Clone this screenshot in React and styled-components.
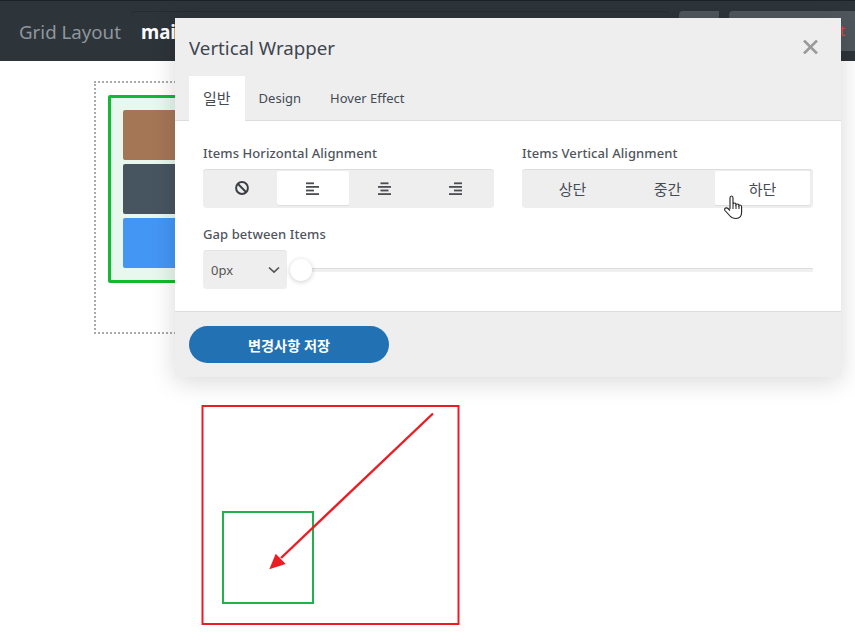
import React from 'react'
import styled, { createGlobalStyle } from 'styled-components';

const FONT = '"Noto Sans", "Noto Sans CJK KR", sans-serif';

export default function App() {
    return (
        <Page>
            <GlobalStyle />
            <Header>
                <PageTitle>Grid Layout</PageTitle>
                <NameField>main</NameField>
                <HeaderButton $width={40} />
                <HeaderButton $width={126}><ExitText>t</ExitText></HeaderButton>
            </Header>
            <Canvas>
                <Wrapper>
                    <Tile $color="#a57656" />
                    <Tile $color="#475561" />
                    <Tile $color="#4496f5" />
                </Wrapper>
            </Canvas>
            <Sketch width="262" height="224" viewBox="0 0 262 224">
                <rect x="2.5" y="2" width="256" height="218" fill="none" stroke="#ed1c24" strokeWidth="2" />
                <rect x="23" y="108" width="90" height="91" fill="none" stroke="#22b14c" strokeWidth="2" />
                <line x1="233" y1="9.5" x2="81" y2="154" stroke="#ed1c24" strokeWidth="2.4" />
                <polygon points="69.3,165.3 75.7,149.7 85.7,160" fill="#ed1c24" />
            </Sketch>

            <Modal>
                <ModalHead>
                    <ModalTitle>Vertical Wrapper</ModalTitle>
                    <CloseIcon width="15" height="14" viewBox="0 0 15 14">
                        <path d="M1 0.5 L14 13.5 M14 0.5 L1 13.5" stroke="#9a9a9a" strokeWidth="2.6" fill="none" />
                    </CloseIcon>
                </ModalHead>
                <Tabs>
                    <Tab $active $hangul>일반</Tab>
                    <Tab>Design</Tab>
                    <Tab>Hover Effect</Tab>
                </Tabs>
                <ModalBody>
                    <Columns>
                        <Field>
                            <Label>Items Horizontal Alignment</Label>
                            <Segments>
                                <Segment><BanIcon /></Segment>
                                <Segment $active><AlignIcon side="left" /></Segment>
                                <Segment><AlignIcon side="center" /></Segment>
                                <Segment><AlignIcon side="right" /></Segment>
                            </Segments>
                        </Field>
                        <Field>
                            <Label>Items Vertical Alignment</Label>
                            <Segments>
                                <Segment>상단</Segment>
                                <Segment>중간</Segment>
                                <Segment $active>하단</Segment>
                            </Segments>
                        </Field>
                    </Columns>
                    <GapField>
                        <Label>Gap between Items</Label>
                        <GapRow>
                            <GapSelect>
                                0px
                                <svg width="12" height="8" viewBox="0 0 12 8">
                                    <path d="M1 1.5 L6 6.2 L11 1.5" stroke="#555" strokeWidth="1.7" fill="none" />
                                </svg>
                            </GapSelect>
                            <Slider>
                                <Knob />
                            </Slider>
                        </GapRow>
                    </GapField>
                </ModalBody>
                <ModalFoot>
                    <SaveButton>변경사항 저장</SaveButton>
                </ModalFoot>
            </Modal>

            <HandCursor width="19" height="25" viewBox="0 0 19 25">
                <path
                    d="M6 14 V3 Q6 1 7.5 1 Q9 1 9 3 V9 Q9.3 8 10.5 8 Q12 8 12 9.5 Q12.3 9 13.5 9 Q15 9 15 10.5 Q15.3 10 16 10 Q17.6 10 17.6 12 V17 Q17.6 23.5 12 23.5 Q8 23.5 6 21 L1 15.5 Q0 14 1.5 13 Q3 12.5 4 13.5 L6 15.5"
                    fill="#fff"
                    stroke="#222"
                    strokeWidth="1.1"
                />
                <path d="M9 9 V14 M12 9.5 V14 M15 10.5 V14" stroke="#222" strokeWidth="1" fill="none" />
            </HandCursor>
        </Page>
    )
}

function BanIcon() {
    return (
        <svg width="14" height="14" viewBox="0 0 14 14">
            <circle cx="7" cy="7" r="5.9" fill="none" stroke="#3b3f45" strokeWidth="2" />
            <line x1="3" y1="3" x2="11" y2="11" stroke="#3b3f45" strokeWidth="2" />
        </svg>
    )
}

const ALIGN_X = {
    left: [0, 0, 0, 0],
    center: [2.5, 0, 2.5, 0],
    right: [5, 0, 5, 0],
};

function AlignIcon({ side }) {
    const widths = [8, 13, 8, 13];
    return (
        <svg width="13" height="13" viewBox="0 0 13 13">
            {widths.map((w, i) => (
                <rect key={i} x={ALIGN_X[side][i]} y={0.4 + i * 3.6} width={w} height="1.8" fill="#4a4d52" />
            ))}
        </svg>
    )
}

const GlobalStyle = createGlobalStyle`
body {
    margin: 0;
    background: #fff;
    font-family: ${FONT};
}
`;

const Page = styled.div`
position: relative;
width: 855px;
height: 644px;
overflow: hidden;
background: #fff;
`;

const Header = styled.div`
display: flex;
align-items: flex-start;
gap: 10px;
box-sizing: border-box;
height: 61px;
padding: 10px 0 0 19px;
background: #2d343a;
border-top: 1px solid #1d2226;
`;

const PageTitle = styled.div`
font-size: 18.7px;
line-height: 42px;
color: #8f979d;
white-space: nowrap;
`;

const NameField = styled.div`
flex: 1;
height: 40px;
padding-left: 10px;
font-size: 18.7px;
font-weight: 700;
line-height: 42px;
color: #fff;
border-radius: 4px;
box-shadow: inset 0 1px 0 #262b30;
`;

const HeaderButton = styled.div`
flex: none;
display: flex;
justify-content: flex-end;
box-sizing: border-box;
width: ${props => props.$width}px;
height: 40px;
padding-right: 10px;
background: #50575d;
border-radius: 4px 0 0 4px;
`;

const ExitText = styled.span`
font-size: 14px;
line-height: 40px;
color: #e0483c;
`;

// squares of 2px every 4px, the border style "dotted" gives round and fainter dots here
const Canvas = styled.div`
box-sizing: border-box;
width: 420px;
height: 253px;
margin: 20px 0 0 94px;
padding: 14px;
background:
    repeating-linear-gradient(90deg, #aaa 0 2px, transparent 2px 4px) top / 100% 2px no-repeat,
    repeating-linear-gradient(90deg, #aaa 0 2px, transparent 2px 4px) bottom / 100% 2px no-repeat,
    repeating-linear-gradient(0deg, #aaa 0 2px, transparent 2px 4px) left / 2px 100% no-repeat;
`;

const Wrapper = styled.div`
display: flex;
flex-direction: column;
gap: 4px;
padding: 12px;
background: #e8f8ee;
border: 3px solid #0fbb30;
border-radius: 2px;
`;

const Tile = styled.div`
height: 50px;
background: ${props => props.$color};
border-radius: 2px;
`;

const Sketch = styled.svg`
display: block;
margin: 70px 0 0 200px;
`;

const Modal = styled.div`
position: absolute;
left: 175px;
top: 18px;
display: flex;
flex-direction: column;
width: 666px;
height: 359px;
background: #eee;
box-shadow: 0 4px 24px rgba(0, 0, 0, 0.16);
`;

const ModalHead = styled.div`
display: flex;
align-items: center;
justify-content: space-between;
height: 58px;
padding: 2px 23px 2px 14px;
box-sizing: border-box;
`;

const ModalTitle = styled.div`
font-size: 18.7px;
line-height: 28px;
margin-top: 2px;
color: #3e4650;
`;

const CloseIcon = styled.svg`
display: block;
`;

const Tabs = styled.div`
display: flex;
gap: 1px;
height: 45px;
padding-left: 14px;
box-sizing: border-box;
border-bottom: 1px solid #ddd;
`;

const Tab = styled.div`
height: ${props => (props.$active ? '45px' : '44px')};
padding: 0 14px;
font-size: ${props => (props.$hangul ? '15px' : '13px')};
line-height: 44px;
color: #444b55;
margin-right: ${props => (props.$active ? '-1px' : '0')};
background: ${props => (props.$active ? '#fff' : 'transparent')};
`;

const ModalBody = styled.div`
flex: none;
box-sizing: border-box;
height: 191px;
padding: 23px 28px 0;
background: #fff;
border-bottom: 1px solid #ddd;
`;

const Columns = styled.div`
display: grid;
grid-template-columns: 1fr 1fr;
gap: 28px;
`;

const Field = styled.div`
display: flex;
flex-direction: column;
`;

const Label = styled.div`
font-size: 13px;
font-weight: 500;
line-height: 18px;
margin-bottom: 7px;
letter-spacing: 0.08px;
color: #50555c;
`;

const Segments = styled.div`
display: flex;
box-sizing: border-box;
height: 39px;
padding: 2px 3px 3px;
background: #eee;
border-radius: 4px;
box-shadow: inset 0 1px 0 #ddd;
`;

const Segment = styled.div`
flex: 1 1 0;
display: flex;
align-items: center;
justify-content: center;
font-size: 15px;
color: #444b55;
background: ${props => (props.$active ? '#fff' : 'transparent')};
box-shadow: ${props => (props.$active ? '0 1px 0 #ddd' : 'none')};
border-radius: 2px;
`;

const GapField = styled.div`
margin-top: 17px;
`;

const GapRow = styled.div`
display: flex;
align-items: center;
`;

const GapSelect = styled.div`
flex: none;
display: flex;
align-items: center;
justify-content: space-between;
box-sizing: border-box;
width: 84px;
height: 39px;
padding: 0 7px 0 8px;
font-size: 13px;
color: #555;
background: #eee;
border-radius: 4px;
box-shadow: inset 0 1px 0 #e4e4e4;
`;

const Slider = styled.div`
position: relative;
flex: 1;
box-sizing: border-box;
height: 4px;
margin-left: 3px;
background: #f0f0f0;
border-top: 1px solid #ddd;
`;

const Knob = styled.div`
position: absolute;
left: 0;
top: -10px;
width: 22px;
height: 22px;
background: #fff;
border-radius: 50%;
box-shadow: 0 1px 5px rgba(0, 0, 0, 0.2);
`;

const ModalFoot = styled.div`
padding: 14px;
`;

const SaveButton = styled.button`
display: block;
width: 200px;
height: 37px;
padding: 0;
font-family: ${FONT};
font-size: 14.2px;
font-weight: 700;
color: #fff;
background: #2271b3;
border: none;
border-radius: 19px;
`;

const HandCursor = styled.svg`
position: absolute;
left: 724px;
top: 195px;
`;
